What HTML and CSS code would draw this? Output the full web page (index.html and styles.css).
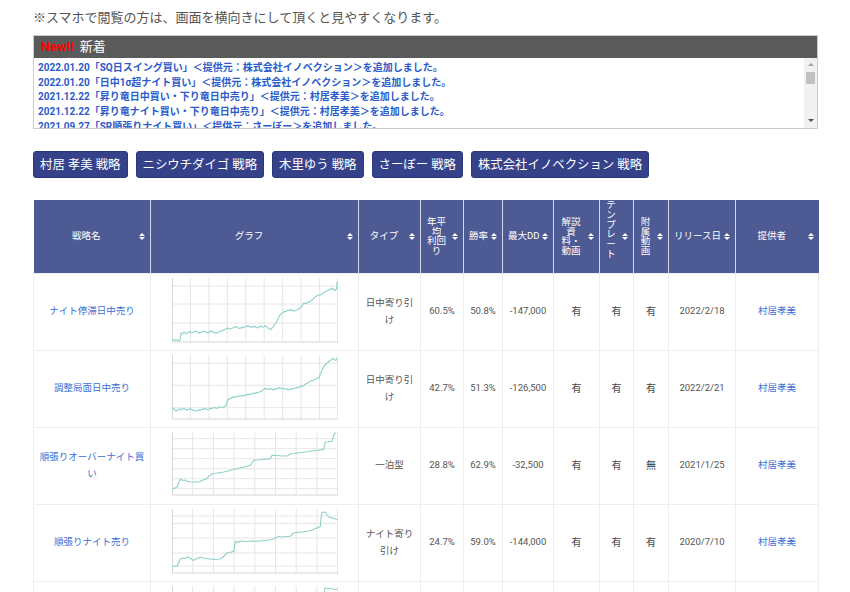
FILE: index.html
```html
<!DOCTYPE html>
<html lang="ja">
<head>
  <meta charset="UTF-8" />
  <meta name="viewport" content="width=device-width, initial-scale=1.0" />
  <title>戦略一覧</title>
  <link rel="stylesheet" href="styles.css">
</head>
<body>
  <div class="page">
    <p class="note">※スマホで閲覧の方は、画面を横向きにして頂くと見やすくなります。</p>

    <div class="news">
      <div class="news-head"><span class="new">New!!</span>新着</div>
      <div class="news-body">
        <ul class="news-list">
          <li><a href="#">2022.01.20「SQ日スイング買い」＜提供元：株式会社イノベクション＞を追加しました。</a></li>
          <li><a href="#">2022.01.20「日中1σ超ナイト買い」＜提供元：株式会社イノベクション＞を追加しました。</a></li>
          <li><a href="#">2021.12.22「昇り竜日中買い・下り竜日中売り」＜提供元：村居孝美＞を追加しました。</a></li>
          <li><a href="#">2021.12.22「昇り竜ナイト買い・下り竜日中売り」＜提供元：村居孝美＞を追加しました。</a></li>
          <li><a href="#">2021.09.27「SR順張りナイト買い」＜提供元：さーぼー＞を追加しました。</a></li>
          <li><a href="#">2021.09.27「SR逆張り日中買い」＜提供元：さーぼー＞を追加しました。</a></li>
        </ul>
        <div class="scrollbar">
          <span class="scroll-up"></span>
          <span class="scroll-thumb"></span>
          <span class="scroll-down"></span>
        </div>
      </div>
    </div>

    <nav class="menu">
      <a href="#">村居 孝美 戦略</a>
      <a href="#">ニシウチダイゴ 戦略</a>
      <a href="#">木里ゆう 戦略</a>
      <a href="#">さーぼー 戦略</a>
      <a href="#">株式会社イノベクション 戦略</a>
    </nav>

    <table class="strategy">
      <colgroup>
        <col style="width:117px"><col style="width:208px"><col style="width:62px"><col style="width:43px">
        <col style="width:39px"><col style="width:51px"><col style="width:46px"><col style="width:34px">
        <col style="width:35px"><col style="width:67px"><col style="width:83px">
      </colgroup>
      <thead>
        <tr>
          <th>戦略名</th>
          <th>グラフ</th>
          <th>タイプ</th>
          <th>年平<br>均<br>利回<br>り</th>
          <th>勝率</th>
          <th>最大DD</th>
          <th>解説<br>資<br>料・<br>動画</th>
          <th class="th-tall">テ<br>ン<br>プ<br>レ<br>ー<br>ト</th>
          <th>附<br>属<br>動<br>画</th>
          <th>リリース日</th>
          <th>提供者</th>
        </tr>
      </thead>
      <tbody>
        <tr>
          <td><a href="#">ナイト停滞日中売り</a></td>
          <td>
            <svg class="chart" width="166" height="68" viewBox="0 0 166 68">
              <path class="grid" d="M18.4 0V64M36.9 0V64M55.3 0V64M73.8 0V64M92.2 0V64M110.7 0V64M129.1 0V64M147.6 0V64M165.5 0V64M0 8H166M0 26H166M0 45H166"/>
              <path class="axis" d="M0.5 0V64H166"/>
              <polyline class="line" points="0,62.5 2,61.6 3,62.4 5,61.8 6,62.8 8,62 9,55 10.5,55.8 12,54 13.5,54.9 15,55.5 16.5,54.2 18,53.5 19.5,54.6 21,54.5 22.5,53.6 24,53 25.5,54.1 27,55 28.5,54 30,54.5 31.5,53.2 33,53.5 34.5,54.6 36,54.8 37.5,53.8 39,53 40.5,53.9 42,54 43.5,55.1 45,55 46.5,54.1 48,53.5 49.5,52.6 51,52.5 52.5,51.6 54,51 55,50.3 56,50 57.5,51.1 59,50.8 60.5,49.9 62,49.5 63.5,48.6 65,49 66.5,50.1 68,50.5 69.5,49.4 71,49.8 72.5,48.9 74,48.5 75.5,47.6 77,48 78.5,49.1 80,49.5 81.5,48.4 83,48.6 84.5,49.5 86,49.8 87.5,48.7 89,48.2 90.5,49.2 92,48.8 93,47.7 94,48 95,49.2 96,50 97.5,51.1 99,51.5 100,50.2 101,49 102.5,46.8 104,45 105,42.8 106,41 107,38.6 108,37 109.5,35.4 111,34.5 112.5,33.6 114,33.5 115.5,32.4 117,32.5 118.5,31.7 120,32 121.5,33.1 123,32.8 124.5,31.9 126,31.5 127.5,30.2 129,29 130.5,26.8 132,25 133.5,25.9 135,24.8 136.5,23.9 138,24 139.5,22.2 141,21 142.5,19.4 144,18.5 145.5,17.6 147,17 148.5,16.9 150,16 151.5,14.5 153,13.8 154.5,13.1 156,12.5 157.5,11.3 159,11.5 160,10.2 161,10.5 162,12 163,12.5 164,11.4 164.5,11 165,4.5 166,3.5"/>
            </svg>
          </td>
          <td>日中寄り引け</td>
          <td>60.5%</td>
          <td>50.8%</td>
          <td>-147,000</td>
          <td class="mark">有</td>
          <td class="mark">有</td>
          <td class="mark">有</td>
          <td>2022/2/18</td>
          <td><a href="#">村居孝美</a></td>
        </tr>
        <tr>
          <td><a href="#">調整局面日中売り</a></td>
          <td>
            <svg class="chart" width="166" height="68" viewBox="0 0 166 68">
              <path class="grid" d="M18.4 0V64M36.9 0V64M55.3 0V64M73.8 0V64M92.2 0V64M110.7 0V64M129.1 0V64M147.6 0V64M165.5 0V64M0 8.3H166M0 30.3H166M0 52.7H166"/>
              <path class="axis" d="M0.5 0V64H166"/>
              <polyline class="line" points="0,52 1,53.1 2,54 3,55.2 4,56 5,55.3 6,55 7,54.1 8,53.7 9,54.9 10,54.5 11.5,53.6 13,53.8 14.5,54.9 16,54.8 17.5,53.9 19,54.3 20.5,55.1 22,55 23.5,56 25,55.8 26.5,54.9 28,55.3 29.5,54.3 31,54.5 32.5,53.4 34,53.7 35.5,54.6 37,54.2 38.5,53.2 40,53.5 41.5,52.6 43,52.8 44.5,53.5 46,52.7 47.5,51.8 49,52 50.5,52.7 52,51.8 53,50.9 54,51 55,47 56.5,43.7 57.5,44.2 59,43 60.5,42.1 62,42.5 63.5,41.6 65,42 66.5,41.1 68,41.3 69.5,40.4 71,41 72.5,40.1 74,40.5 75.5,39.2 77,39.8 78.5,38.9 80,39 81.5,38.2 83,38.5 84.5,37.4 86,37.7 87.5,36.8 89,36.5 90.5,35.1 92,34.5 93,33.6 94,33.3 95.5,34.4 97,34.5 98.5,33.6 100,34 101.5,35 103,34.3 104.5,33.4 106,33.5 107.5,32.6 109,33 110.5,34.1 112,33.3 113.5,34.2 115,33.8 116.5,34.9 118,34.5 119.5,33.5 121,34 122.5,33.1 124,33.2 125.5,32.1 127,32.5 128.5,31.2 130,31.5 131,30.6 132,30.3 133.5,29.1 135,28.5 136.5,27.2 138,26.5 139.5,25.6 141,25.5 142.5,24.4 144,24 145.5,23.1 147,22.7 148,20.1 149,18 150,15 151,12.7 152,11.4 153,10 154,9.2 155,8 156,7.5 157,6.5 158,5.6 159,5 160,4.1 161,3.3 162,4.4 163,5 164,5.3 165,3.3"/>
            </svg>
          </td>
          <td>日中寄り引け</td>
          <td>42.7%</td>
          <td>51.3%</td>
          <td>-126,500</td>
          <td class="mark">有</td>
          <td class="mark">有</td>
          <td class="mark">有</td>
          <td>2022/2/21</td>
          <td><a href="#">村居孝美</a></td>
        </tr>
        <tr>
          <td><a href="#">順張りオーバーナイト買い</a></td>
          <td>
            <svg class="chart" width="166" height="68" viewBox="0 0 166 68">
              <path class="grid" d="M20.7 0V63M41.4 0V63M62.1 0V63M82.8 0V63M103.5 0V63M124.2 0V63M144.9 0V63M165.5 0V63M0 6.7H166M0 16.7H166M0 26.7H166M0 36.7H166M0 46.7H166M0 56.7H166"/>
              <path class="axis" d="M0.5 0V63H166"/>
              <polyline class="line" points="0,56.7 3,56 5,55 7,50 8.3,47.3 11,48.5 13,48 15,49.3 18,49.8 21,50 25,50 28,49.5 31,48 35,46.7 37,44 40,41.7 43,41.5 46,41 49,40.5 51.7,40 55,39.2 58.3,38.3 62,37.5 66,36.5 70,35.5 74,34.5 78.3,33.3 80,31 81.7,28.3 85,28 89,27.8 93,27.3 98.3,26.7 99,25 100,23.3 104,23.5 108,23.8 112,24 115,24 117,23 118.3,21.7 122,21.5 126,21 130,20.5 134,20 138.3,19.3 142,18.8 146,18.3 151.7,17.3 152.5,13 153.3,10 156,9.8 160,9.3 161,6 161.7,3.3 163,1.5 164.3,0.7"/>
            </svg>
          </td>
          <td>一泊型</td>
          <td>28.8%</td>
          <td>62.9%</td>
          <td>-32,500</td>
          <td class="mark">有</td>
          <td class="mark">有</td>
          <td class="mark">無</td>
          <td>2021/1/25</td>
          <td><a href="#">村居孝美</a></td>
        </tr>
        <tr>
          <td><a href="#">順張りナイト売り</a></td>
          <td>
            <svg class="chart" width="166" height="68" viewBox="0 0 166 68">
              <path class="grid" d="M20.7 0V64M41.4 0V64M62.1 0V64M82.8 0V64M103.5 0V64M124.2 0V64M144.9 0V64M165.5 0V64M0 7H166M0 14.5H166M0 29H166M0 44H166M0 57H166"/>
              <path class="axis" d="M0.5 0V64H166"/>
              <polyline class="line" points="0,57.3 3,57.3 5,57.3 6.5,54 8.3,50 11,49 13,49.5 15,48 18,49 20,50.5 21.7,51.3 24,50 26,49 28.3,48.3 31,49 34,49.5 38.3,50 42,50.5 45,50.2 48.3,50 51,48 53,46 55,44 58,43.5 61.7,42.3 62.5,38 63.3,32.3 66,33.5 68,32 71.7,32.3 75,32.5 79,32 85,32.3 90,31.8 94,31.5 98.3,30.7 102,29.8 106.7,27.3 110,28 114,27.5 118.3,27.3 120,25.5 121.7,24 125,23.5 130,23 135,22.3 140,21 145,19 148.3,17.3 149,10 150,3.3 153.3,3.3 155,6 156.7,8 160,9 163,9.8 165,10.7"/>
            </svg>
          </td>
          <td>ナイト寄り引け</td>
          <td>24.7%</td>
          <td>59.0%</td>
          <td>-144,000</td>
          <td class="mark">有</td>
          <td class="mark">有</td>
          <td class="mark">有</td>
          <td>2020/7/10</td>
          <td><a href="#">村居孝美</a></td>
        </tr>
        <tr>
          <td><a href="#">逆張り日中買い</a></td>
          <td>
            <svg class="chart" width="166" height="68" viewBox="0 0 166 68">
              <path class="grid" d="M20.7 0V64M41.4 0V64M62.1 0V64M82.8 0V64M103.5 0V64M124.2 0V64M144.9 0V64M165.5 0V64M0 7H166M0 21H166M0 35H166M0 49H166"/>
              <path class="axis" d="M0.5 0V64H166"/>
              <polyline class="line" points="0,58 6,57 10,54 16,55 22,52 30,50 38,48 46,47 54,44 62,42 70,40 78,37 86,35 94,33 102,30 110,29 118,26 126,24 134,22 142,20 150,18 153,2 157,2.5 161,3 165,3.5"/>
            </svg>
          </td>
          <td>日中寄り引け</td>
          <td>21.4%</td>
          <td>55.2%</td>
          <td>-98,000</td>
          <td class="mark">有</td>
          <td class="mark">有</td>
          <td class="mark">有</td>
          <td>2020/5/12</td>
          <td><a href="#">さーぼー</a></td>
        </tr>
      </tbody>
    </table>
  </div>
</body>
</html>
```

FILE: styles.css
```css
* { box-sizing: border-box; }
body {
  margin: 0;
  font-family: Roboto, "Noto Sans CJK JP", sans-serif;
  color: #555;
  background: #fff;
}
a { text-decoration: none; }
.page { padding: 0 32px 40px 33px; }

.note {
  margin: 0; padding-top: 9px;
  font-size: 13px; line-height: 18px; color: #555;
}

/* news box */
.news { margin-top: 8px; border: 1px solid #ccc; }
.news-head {
  height: 22px; line-height: 22px; padding-left: 7px;
  background: #5a5a5a; color: #fff; font-size: 13px;
}
.news-head .new { color: #f00; font-weight: bold; margin-right: 6px; }
.news-body { display: flex; height: 70px; }
.news-list {
  flex: 1; list-style: none; margin: 0; padding: 3px 4px 0;
  overflow: hidden; font-size: 10px; line-height: 14.7px;
}
.news-list a { color: #2b5bc9; font-weight: bold; white-space: nowrap; }
.scrollbar {
  width: 13px; background: #f1f1f1;
  display: flex; flex-direction: column; align-items: center;
}
.scroll-up, .scroll-down {
  width: 0; height: 0; margin-top: 5px;
  border-left: 3px solid transparent; border-right: 3px solid transparent;
}
.scroll-up { border-bottom: 3px solid #a3a3a3; }
.scroll-down { border-top: 3px solid #505050; margin-top: auto; margin-bottom: 6px; }
.scroll-thumb { width: 9px; height: 12px; margin-top: 6px; background: #c1c1c1; }

/* strategy buttons */
.menu { display: flex; gap: 8px; margin-top: 22px; }
.menu a {
  height: 27px; line-height: 25px; padding: 0 6px;
  background: #35428a; border: 1px solid #2b3776; border-radius: 3px;
  color: #fff; font-size: 12.4px; white-space: nowrap;
}

/* table */
.strategy {
  width: 785px; margin-top: 22px;
  border-collapse: collapse; table-layout: fixed;
  font-size: 9.5px;
}
.strategy th {
  position: relative;
  height: 73px; padding: 0 16px 0 5px;
  background: #4d5a93; color: #fff;
  font-weight: normal; line-height: 9.8px; white-space: nowrap;
  border-right: 1px solid #d4d7e6;
}
.strategy th:last-child { border-right: none; }
.strategy th.th-tall { padding-bottom: 14px; }
.strategy th::before, .strategy th::after {
  content: ""; position: absolute; right: 5px;
  border-left: 3px solid transparent; border-right: 3px solid transparent;
}
.strategy th::before { top: calc(50% - 3px); border-bottom: 3px solid #fff; }
.strategy th::after { top: calc(50% + 1px); border-top: 3px solid #fff; }

.strategy td {
  height: 77px; padding: 0 5px;
  text-align: center; vertical-align: middle;
  line-height: 1.75; color: #555;
  border: 1px solid #eee;
}
.strategy td a { color: #3b6fd4; }
.strategy td.mark { color: #444; font-size: 10px; }

.chart { display: block; margin: 0 auto; }
.chart .grid { stroke: #e6e6e6; stroke-width: 1; fill: none; }
.chart .axis { stroke: #d6d6d6; stroke-width: 1; fill: none; }
.chart .line { stroke: #8dd0c8; stroke-width: 1.1; fill: none; }
```
